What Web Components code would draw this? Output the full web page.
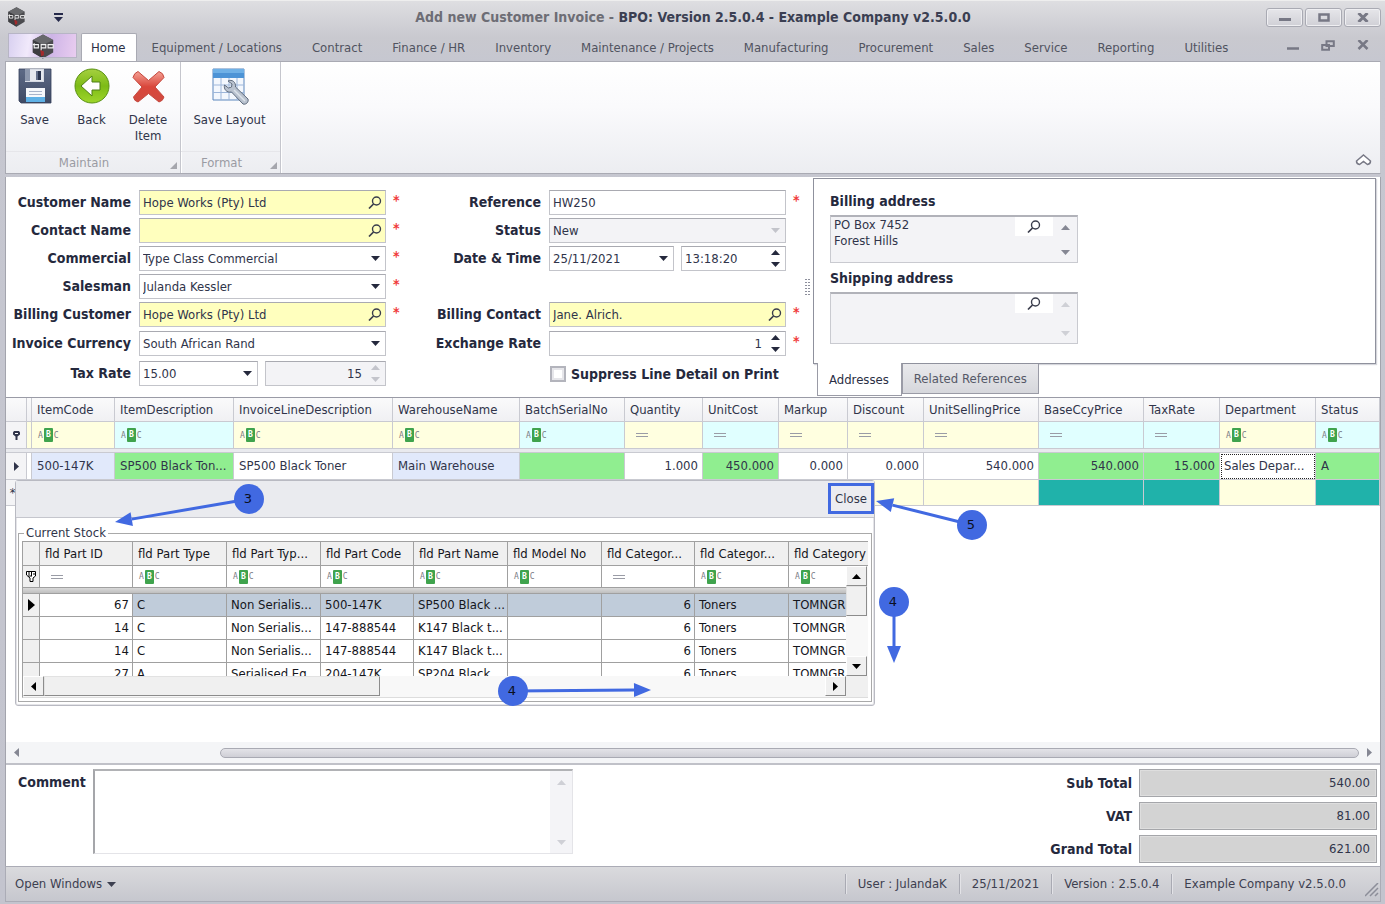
<!DOCTYPE html>
<html lang="en">
<head>
<meta charset="utf-8">
<title>Add new Customer Invoice</title>
<style>
  html, body { margin: 0; }
  body {
    font-family: "DejaVu Sans Condensed", "Noto Sans", sans-serif;
    font-size: 13px; line-height: 16px; color: #30344a;
    --line: #a3a4ad; --soft: #c9cad1; --muted: #6a6d7a; --panel: #f3f3f6;
  }
</style>
</head>
<body>
<app-window>
  <title-bar slot="title" document="Add new Customer Invoice" product="BPO: Version 2.5.0.4 - Example Company v2.5.0.0"></title-bar>
  <ribbon-tabs slot="tabs" tabs="Home|Equipment / Locations|Contract|Finance / HR|Inventory|Maintenance / Projects|Manufacturing|Procurement|Sales|Service|Reporting|Utilities"></ribbon-tabs>
  <ribbon-body slot="ribbon">
    <ribbon-group caption="Maintain">
      <ribbon-button icon="save">Save</ribbon-button>
      <ribbon-button icon="back">Back</ribbon-button>
      <ribbon-button icon="delete">Delete Item</ribbon-button>
    </ribbon-group>
    <ribbon-group caption="Format">
      <ribbon-button icon="layout" wide>Save Layout</ribbon-button>
    </ribbon-group>
  </ribbon-body>
  <invoice-form slot="form">
    <form-field slot="party" label="Customer Name" kind="lookup" value="Hope Works (Pty) Ltd" required></form-field>
    <form-field slot="party" label="Contact Name" kind="lookup" value="" required></form-field>
    <form-field slot="party" label="Commercial" kind="select" value="Type Class Commercial" required></form-field>
    <form-field slot="party" label="Salesman" kind="select" value="Julanda Kessler" required></form-field>
    <form-field slot="party" label="Billing Customer" kind="lookup" value="Hope Works (Pty) Ltd" required></form-field>
    <form-field slot="money" label="Invoice Currency" kind="select" value="South African Rand"></form-field>
    <form-field slot="money" label="Tax Rate" kind="tax" value="15.00" second="15"></form-field>

    <form-field slot="details" label="Reference" kind="text" value="HW250" required></form-field>
    <form-field slot="details" label="Status" kind="status" value="New"></form-field>
    <form-field slot="details" label="Date &amp; Time" kind="datetime" value="25/11/2021" second="13:18:20"></form-field>
    <form-field slot="contact" label="Billing Contact" kind="lookup" value="Jane. Alrich." required></form-field>
    <form-field slot="rate" label="Exchange Rate" kind="spin" value="1" required></form-field>
    <form-field slot="rate" label="Suppress Line Detail on Print" kind="check"></form-field>

    <tab-panel slot="addresses" tabs="Addresses|Related References">
      <address-box label="Billing address" lines="PO Box 7452|Forest Hills" scrolls></address-box>
      <address-box label="Shipping address" lines="" tall></address-box>
    </tab-panel>
  </invoice-form>
  <line-grid slot="grid">
    <stock-popup heading="Current Stock"></stock-popup>
    <step-callouts></step-callouts>
  </line-grid>
  <invoice-footer slot="footer">
    <comment-box></comment-box>
    <total-field slot="totals" label="Sub Total" value="540.00"></total-field>
    <total-field slot="totals" label="VAT" value="81.00"></total-field>
    <total-field slot="totals" label="Grand Total" value="621.00"></total-field>
  </invoice-footer>
  <status-bar slot="status">
    <span slot="item">User : JulandaK</span>
    <span slot="item">25/11/2021</span>
    <span slot="item">Version : 2.5.0.4</span>
    <span slot="item">Example Company v2.5.0.0</span>
  </status-bar>
</app-window>

<script>
const RESET = `
  :host, *, ::before, ::after { box-sizing: border-box; }
  :host { display: block; }
  button, input, select, textarea { font: inherit; color: inherit; margin: 0; padding: 0; border: 0; background: none; border-radius: 0; outline: 0; }
  select { appearance: none; }
  textarea { resize: none; }
  svg { display: block; flex: none; }
`;

const LOGO = (w, h) => `<svg width="${w}" height="${h}" viewBox="0 0 24 27">
  <path d="M12 .5 23 6.500V20L12 26.500 1 20V6.500Z" fill="#4b4b4f"/>
  <path d="M12 .5 23 6.500 12 12 1 6.500Z" fill="#68696c"/>
  <path d="M12 12V26.500L1 20V6.500Z" fill="#3d3d40"/>
  <path d="M9 17l4 2v4l-3 1Z" fill="#a32a2c"/>
  <path d="M1 11.500H7V15H2.500V10M10 17.500V11.500H15V15H10M17.500 11.500H23V15H17.500Z" fill="none" stroke="#f2f2f2" stroke-width="1.200"/>
</svg>`;

const ICONS = {
  down: `<svg width="9" height="5" viewBox="0 0 9 5"><path d="M0 0H9L4.500 5Z" fill="currentColor"/></svg>`,
  up: `<svg width="9" height="5" viewBox="0 0 9 5"><path d="M0 5H9L4.500 0Z" fill="currentColor"/></svg>`,
  left: `<svg width="5" height="9" viewBox="0 0 5 9"><path d="M5 0V9L0 4.500Z" fill="currentColor"/></svg>`,
  right: `<svg width="5" height="9" viewBox="0 0 5 9"><path d="M0 0V9L5 4.500Z" fill="currentColor"/></svg>`,
  search: `<svg width="14" height="14" viewBox="0 0 14 14" fill="none" stroke="#3a3d4c"><circle cx="8.500" cy="5" r="4" stroke-width="1.400"/><path d="M5.500 8 1 12.500" stroke-width="1.700"/></svg>`,
  save: `<svg width="36" height="36" viewBox="0 0 36 36">
    <defs><linearGradient id="g" x2="0" y2="1"><stop stop-color="#5d6a86"/><stop offset="1" stop-color="#3f4a64"/></linearGradient></defs>
    <path d="M2 1H34V35H4L2 33Z" fill="url(#g)" stroke="#36405a" stroke-width=".8"/>
    <path d="M8 1H27V14H8Z" fill="#d6dae3"/><path d="M8 1H13V13H8Z" fill="#8c97ad"/><path d="M13 2H26V13H13Z" fill="#e6e9ef"/>
    <path d="M19 3h5v9h-5z" fill="#2b3650"/><path d="M19 3h2v9h-2z" fill="#66728c"/>
    <path d="M9 20H28V34H9Z" fill="#f6f8fb"/><path d="M9 29H28V34H9Z" fill="#5fb1e6"/>
    <path d="M12 23.500H25M12 26.500H25" stroke="#a9b4ca" stroke-width="1.200"/></svg>`,
  back: `<svg width="36" height="36" viewBox="0 0 36 36">
    <defs><linearGradient id="g" x2="0" y2="1"><stop stop-color="#a5d040"/><stop offset=".5" stop-color="#7dbb16"/><stop offset="1" stop-color="#9fd62c"/></linearGradient></defs>
    <circle cx="18" cy="18" r="17" fill="url(#g)" stroke="#5a9214"/>
    <path d="M7 18 18 8V14H26V22H18V28Z" fill="#fff" stroke="#4f7f16"/></svg>`,
  delete: `<svg width="36" height="36" viewBox="0 0 36 36">
    <defs><linearGradient id="g" x2="0" y2="1"><stop stop-color="#f5a195"/><stop offset=".5" stop-color="#d9473b"/><stop offset="1" stop-color="#d04a40"/></linearGradient></defs>
    <path d="M8 3.500 18.500 12.500 29 3.500Q33.500 5 34 9.500L25 19 34 29Q33 33 29 34L18.500 25.500 8 34Q4 33 3.500 29L12 19 3 9.500Q4 5 8 3.500Z" fill="url(#g)" stroke="#c5493f" stroke-linejoin="round"/></svg>`,
  layout: `<svg width="38" height="38" viewBox="0 0 38 38">
    <path d="M2 1H33V32H2Z" fill="#f3f7fd" stroke="#5d87bd"/>
    <path d="M2 1H33V10H2Z" fill="#4c93d6"/><path d="M2 1H33V5H2Z" fill="#6fb0e6"/>
    <path d="M2 17H33M2 24.500H33M10 10V32M18 10V32M26 10V32" stroke="#9db6da" fill="none"/>
    <path d="M17 13c4-2 8 1 7.500 6L37 31c1 3-2 6-5 5L20.500 24c-5 1-8-3-7-7l4 3 3-1 .5-3Z" fill="#b9c2cf" stroke="#5f6b7d"/>
    <path d="M23 22 34 33" stroke="#dde3ea" stroke-width="1.500"/></svg>`,
  funnel: `<svg width="7" height="9" viewBox="0 0 7 9"><path d="M0 1.500 1 0H6L7 1.500V3.500L4.500 5.500V9H2.500V5.500L0 3.500Z" fill="#30344a"/><path d="M2 2H5V3H2Z" fill="#fff"/></svg>`,
  hand: `<svg width="10" height="11" viewBox="0 0 10 11"><path d="M.5.5H9.500V5L7 7V10.500H4V7L.5 4Z" fill="#fff" stroke="#000"/><path d="M3 1V4M5.500 1V5M7 3H9M2 5H6" stroke="#000"/></svg>`
};

/* Base element: renders markup() together with styles() into an open shadow root. */
class Part extends HTMLElement {
  constructor() { super(); this.attachShadow({ mode: "open" }); }
  connectedCallback() {
    const t = document.createElement("template");
    t.innerHTML = `<style>${RESET}${this.styles()}</style>${this.markup()}`;
    this.shadowRoot.replaceChildren(t.content.cloneNode(true));
  }
  at(name) { return this.getAttribute(name) || ""; }
  styles() { return ""; }
  markup() { return "<slot></slot>"; }
}
const define = (name, cls) => customElements.define(name, cls);

define("app-window", class extends Part {
  styles() { return `
    :host { display: flex; flex-direction: column; min-height: 100vh; padding: 0 4px 2px 5px;
      background: linear-gradient(#dedee1, #c9c9cf 36px, #c6c7d0 60px, #c3c4ce); border-top: 1px solid #eee; }
    .work { flex: 1; display: flex; flex-direction: column; background: #fff; border-left: 1px solid var(--line); border-right: 1px solid var(--line); }
    .grid { flex: 1; display: flex; flex-direction: column; }
  `; }
  markup() { return `<slot name="title"></slot><slot name="tabs"></slot><slot name="ribbon"></slot>
    <main class="work"><slot name="form"></slot><div class="grid"><slot name="grid"></slot></div><slot name="footer"></slot></main>
    <slot name="status"></slot>`; }
});

define("title-bar", class extends Part {
  styles() { return `
    :host { display: grid; grid-template-columns: 1fr auto 1fr; align-items: center; height: 32px; }
    .left { display: flex; align-items: center; gap: 28px; padding-left: 2px; }
    .quick { color: #25294a; border-top: 2px solid; padding-top: 2px; }
    h1 { margin: 0; font-size: 14px; font-weight: bold; color: #3b3f52; white-space: nowrap; }
    h1 span { color: #6d6d75; }
    .right { display: flex; justify-content: flex-end; gap: 2px; }
    .right button { width: 37px; height: 19px; display: grid; place-items: center; border: 1px solid #a9aab3; border-radius: 3px;
      background: linear-gradient(#e6e6ea, #d0d0d6); box-shadow: inset 0 0 0 1px #efeff2; }
  `; }
  markup() { return `<div class="left">${LOGO(19, 20)}<button class="quick" aria-label="Customize">${ICONS.down}</button></div>
    <h1><span>${this.at("document")} - </span>${this.at("product")}</h1>
    <div class="right">
      <button aria-label="Minimize"><svg width="12" height="8"><path d="M0 6.500H12" stroke="#777885" stroke-width="3"/></svg></button>
      <button aria-label="Maximize"><svg width="12" height="9"><rect x="1.500" y="1.500" width="9" height="6" fill="none" stroke="#777885" stroke-width="2.500"/></svg></button>
      <button aria-label="Close window"><svg width="12" height="9"><path d="M1.500 0 10.500 9M10.500 0 1.500 9" stroke="#777885" stroke-width="3"/></svg></button>
    </div>`; }
});

define("ribbon-tabs", class extends Part {
  styles() { return `
    :host { display: flex; height: 28px; }
    .app { width: 69px; height: 25px; margin: 0 4px 0 3px; display: grid; place-items: center; border: 1px solid #f3eefa; outline: 1px solid #b7b5c5;
      outline-offset: -1px; background: linear-gradient(100deg, #d8d0f0, #f1e9fb 30%, #cdb4e6 60%, #e9cdf0); }
    nav { flex: 1; display: flex; }
    a { padding: 7px 15px 0; color: #50535f; text-decoration: none; white-space: nowrap; }
    a.on { padding: 6px 10px 0 9px; color: #2b2f45; background: #fff; border: 1px solid #a9aab3; border-bottom: 0; border-radius: 2px 2px 0 0; }
    .mdi { display: flex; align-items: center; gap: 22px; padding: 0 12px 4px 0; }
  `; }
  markup() { return `<button class="app" aria-label="Application menu">${LOGO(24, 25)}</button>
    <nav>${this.at("tabs").split("|").map((t, i) => `<a href="#" class="${i ? "" : "on"}">${t}</a>`).join("")}</nav>
    <div class="mdi">
      <button aria-label="Minimize form"><svg width="12" height="10"><path d="M0 8.500H12" stroke="#777885" stroke-width="2.500"/></svg></button>
      <button aria-label="Restore form"><svg width="14" height="11"><path d="M5.500 1.200H12.800V6H5.500ZM1.200 5H8V9.800H1.200Z" fill="none" stroke="#777885" stroke-width="2"/></svg></button>
      <button aria-label="Close form"><svg width="12" height="10"><path d="M1.500 0 10.500 9M10.500 0 1.500 9" stroke="#777885" stroke-width="2.500"/></svg></button>
    </div>`; }
});

define("ribbon-body", class extends Part {
  styles() { return `
    :host { display: flex; height: 113px; background: linear-gradient(#fff, #fafafc 40%, #ecedf1); border: 1px solid #a9aab3; border-right-color: #c5c6cd; margin-bottom: 3px; }
    .fill { flex: 1; display: flex; justify-content: flex-end; align-items: flex-end; padding: 0 8px 7px; }
  `; }
  markup() { return `<slot></slot><div class="fill"><button aria-label="Collapse ribbon"><svg width="17" height="12" viewBox="0 0 17 12"><path d="M8.500 1 15.500 7Q15.500 10 12.500 10.500L8.500 7.500 4.500 10.500Q1.500 10 1.500 7Z" fill="#fff" stroke="#777885" stroke-width="1.500"/></svg></button></div>`; }
});

define("ribbon-group", class extends Part {
  styles() { return `
    :host { display: flex; flex-direction: column; border-right: 1px solid #c5c6cd; box-shadow: 1px 0 #fff; }
    .row { flex: 1; display: flex; }
    .cap { display: flex; height: 22px; align-items: center; border-top: 1px solid #e6e6ea; color: #9a9ba3; padding-right: 3px; }
    .cap span { flex: 1; text-align: center; padding-right: 8px; }
    .cap svg { align-self: flex-end; margin-bottom: 4px; }
  `; }
  markup() { return `<div class="row"><slot></slot></div><div class="cap"><span>${this.at("caption")}</span>
    <svg width="7" height="7"><path d="M7 0V7H0Z" fill="#a5a6ad"/></svg></div>`; }
});

define("ribbon-button", class extends Part {
  styles() { return `
    :host { display: flex; }
    button { width: 57px; padding: 6px 2px 0; display: flex; flex-direction: column; align-items: center; gap: 8px; }
    :host([icon="delete"]) button { width: 60px; padding-right: 6px; }
    :host([wide]) button { width: 99px; padding: 6px 4px 0 2px; gap: 6px; }
    .pic { height: 38px; }
    :host(:not([wide])) .pic { height: 36px; }
  `; }
  markup() { return `<button><span class="pic">${ICONS[this.at("icon")]}</span><span><slot></slot></span></button>`; }
});

define("invoice-form", class extends Part {
  styles() { return `
    :host { display: flex; height: 220px; }
    .col { display: flex; flex-direction: column; gap: 3px; padding-top: 13px; }
    .a { --label: 125px; --control: 247px; }
    .b { --label: 139px; --control: 237px; }
    .sub { display: flex; flex-direction: column; gap: 5px; margin-top: 1px; }
    .blank { height: 25px; }
    .grip { width: 11px; display: grid; place-items: center; }
    .side { flex: 1; display: flex; padding: 1px 4px 0 0; }
  `; }
  markup() { return `
    <div class="col a"><slot name="party"></slot><div class="sub"><slot name="money"></slot></div></div>
    <div class="col b"><slot name="details"></slot><div class="blank"></div><slot name="contact"></slot><div class="sub"><slot name="rate"></slot></div></div>
    <div class="grip"><svg width="5" height="18"><path d="M1 1V18M4 1V18" stroke="#8d8f9c" stroke-width="2" stroke-dasharray="1 2"/></svg></div>
    <div class="side"><slot name="addresses"></slot></div>`; }
});

define("form-field", class extends Part {
  styles() { return `
    :host { display: flex; height: 25px; }
    .name { width: var(--label); margin-right: 8px; text-align: right; font-weight: bold; font-size: 14px; line-height: 25px; white-space: nowrap; color: #25293d; }
    .controls { width: var(--control); display: flex; gap: 7px; }
    .box { display: flex; min-width: 0; flex: 1; border: 1px solid #c3c4ca; border-top-color: #a9aab1; background: #fff; align-items: center; }
    .box > input, .box > select { flex: 1; min-width: 0; height: 100%; padding: 0 3px; }
    .lookup { background: #ffffbe; }
    .off { background: var(--panel); }
    .btn { width: 20px; display: grid; place-items: center; color: #25293d; pointer-events: none; }
    .off .btn { color: #c3c4cb; }
    .spin { gap: 7px; }
    .right { text-align: right; }
    .w { flex: none; }
    .star { width: 9px; margin-left: 7px; color: #f03a3a; font-weight: bold; font-size: 14px; line-height: 20px; }
    .check { align-items: center; gap: 5px; padding-left: 1px; }
    .check input { appearance: none; width: 16px; height: 16px; border: 2px solid #b3b4bc; background: #fff; box-shadow: inset 0 0 0 2px #e6e6ea; }
    .check label { font-weight: bold; font-size: 14px; white-space: nowrap; color: #25293d; }
  `; }
  markup() {
    const v = this.at("value"), s = this.at("second"), name = this.at("label"), kind = this.at("kind");
    const spin = `<span class="btn spin">${ICONS.up}${ICONS.down}</span>`;
    const drop = `<span class="btn">${ICONS.down}</span>`;
    const pick = `<select id="c"><option>${v}</option></select>${drop}`;
    if (kind === "check") return `<span class="name"></span><div class="controls check"><input type="checkbox" id="c"><label for="c">${name}</label></div>`;
    const body = {
      lookup: () => `<div class="box lookup"><input id="c" value="${v}"><button class="btn" aria-label="Find ${name}">${ICONS.search}</button></div>`,
      select: () => `<div class="box">${pick}</div>`,
      status: () => `<div class="box off">${pick}</div>`,
      text: () => `<div class="box"><input id="c" value="${v}"></div>`,
      spin: () => `<div class="box"><input id="c" class="right" value="${v}">${spin}</div>`,
      tax: () => `<div class="box w" style="width:119px">${pick}</div><div class="box off"><input class="right" value="${s}" readonly aria-label="Tax percentage">${spin}</div>`,
      datetime: () => `<div class="box w" style="width:125px"><input id="c" value="${v}">${drop}</div><div class="box"><input value="${s}" aria-label="Time">${spin}</div>`
    }[kind]();
    return `<label class="name" for="c">${name}</label><div class="controls">${body}</div><span class="star">${this.hasAttribute("required") ? "*" : ""}</span>`;
  }
});

define("tab-panel", class extends Part {
  styles() { return `
    :host { flex: 1; display: flex; flex-direction: column; }
    .page { height: 186px; border: 1px solid #8f919d; box-shadow: 1px 1px 1px #d5d6dc; padding: 14px 16px; display: flex; flex-direction: column; gap: 7px; }
    .tabs { display: flex; align-items: flex-start; padding-left: 4px; }
    a { text-decoration: none; color: #555867; padding: 0 11px; line-height: 29px; height: 30px; border: 1px solid #9a9ba6; border-top: 0; background: linear-gradient(#e9e9ec, #d6d7dc); white-space: nowrap; }
    a.on { position: relative; margin-top: -1px; height: 33px; line-height: 34px; background: #fff; color: #2b2f45; padding: 0 12px 0 11px; }
  `; }
  markup() { return `<div class="page"><slot></slot></div>
    <div class="tabs">${this.at("tabs").split("|").map((t, i) => `<a href="#" class="${i ? "" : "on"}">${t}</a>`).join("")}</div>`; }
});

define("address-box", class extends Part {
  styles() { return `
    label { display: block; font-weight: bold; font-size: 14px; color: #25293d; margin-bottom: 6px; }
    .box { width: 248px; height: 48px; display: flex; background: var(--panel); border: 1px solid #c9cad0; border-top: 2px solid #b1b2b9; }
    :host([tall]) .box { height: 52px; }
    textarea { flex: 1; min-width: 0; padding: 0 3px; overflow: hidden; }
    button { width: 38px; height: 19px; display: grid; place-items: center; background: #fff; }
    .scroll { width: 24px; padding: 8px 0 7px; display: flex; flex-direction: column; justify-content: space-between; align-items: center; color: #cfd0d6; }
    :host([scrolls]) .scroll { color: #858793; }
  `; }
  markup() { return `<label for="c">${this.at("label")}</label><div class="box">
    <textarea id="c" readonly>${this.at("lines").split("|").join("\n")}</textarea>
    <button aria-label="Find address">${ICONS.search}</button><span class="scroll">${ICONS.up}${ICONS.down}</span></div>`; }
});

const ABC = `<span class="abc"><i>A</i><b>B</b><i>C</i></span>`;
const EQ = `<svg class="eq" width="12" height="6"><path d="M0 1.500H12M0 4.500H12" stroke="#9a9ca6"/></svg>`;
const ABC_CSS = `
  .abc { display: flex; align-items: center; gap: 1px; font: 8px/13px "DejaVu Sans Mono", monospace; color: #7b7d86; }
  .abc i { font-style: normal; }
  .abc b { background: #3fa34d; color: #fff; width: 9px; height: 14px; line-height: 14px; text-align: center; border-radius: 1px; }
  .eq { margin-left: 5px; }
`;

/* name, width, read-only, filter kind, value, tint */
const LINES = [
  ["ItemCode", 83, 0, "t", "500-147K", "blue"], ["ItemDescription", 119, 1, "t", "SP500 Black Ton...", "green"],
  ["InvoiceLineDescription", 159, 0, "t", "SP500 Black Toner", ""], ["WarehouseName", 127, 0, "t", "Main Warehouse", "blue"],
  ["BatchSerialNo", 105, 1, "t", "", "green"], ["Quantity", 78, 0, "n", "1.000", ""],
  ["UnitCost", 76, 1, "n", "450.000", "green"], ["Markup", 69, 0, "n", "0.000", ""],
  ["Discount", 76, 0, "n", "0.000", ""], ["UnitSellingPrice", 115, 0, "n", "540.000", ""],
  ["BaseCcyPrice", 105, 1, "n", "540.000", "green"], ["TaxRate", 76, 1, "n", "15.000", "green"],
  ["Department", 96, 0, "t", "Sales Depar...", "focus"], ["Status", 0, 1, "t", "A", "green"]
];

define("line-grid", class extends Part {
  styles() { return `
    :host { flex: 1; display: flex; flex-direction: column; position: relative; border-top: 1px solid #9a9ba6; border-bottom: 2px solid #c0c1c8; min-height: 368px; }
    table { width: 100%; table-layout: fixed; border-collapse: separate; border-spacing: 0; }
    th, td { padding: 0 4px 0 5px; text-align: left; font-weight: normal; white-space: nowrap; overflow: hidden; border-right: 1px solid var(--soft); border-bottom: 1px solid var(--soft); }
    th:first-child, td:first-child { padding: 0; }
    .head th { height: 24px; background: linear-gradient(#fafafb, #f0f0f3); }
    .filter td { height: 27px; background: #ffffe0; padding-left: 6px; }
    .filter td.ro { background: #e0ffff; }
    .band td { height: 4px; background: #e9eaee; border-right: 0; padding: 0; }
    .row td { height: 27px; }
    .new td { height: 26px; background: #ffffe0; }
    .new td.ro { background: #20b2aa; }
    td.ind, .filter td.ind, .new td.ind { background: #f4f4f6; padding: 0; }
    td.ind svg { margin: 0 auto; }
    .row .blue { background: #e1e9fb; } .row .green { background: #90ee90; }
    .focus { outline: 1px dotted #222; outline-offset: -2px; padding-left: 4px; }
    .num { text-align: right; }
    .scroll { display: flex; align-items: center; gap: 8px; height: 21px; margin-top: auto; padding: 0 8px; background: #f4f5f7; color: #858793; }
    .track { flex: 1; height: 10px; padding-left: 193px; }
    .thumb { height: 10px; border: 1px solid #a9aab3; border-radius: 5px; background: linear-gradient(#e3e3e8, #cfcfd6); }
    ${ABC_CSS}
  `; }
  markup() {
    const row = (cls, ind, f) => `<tr class="${cls}"><td class="ind">${ind}</td><td></td>${LINES.map(f).join("")}</tr>`;
    return `<table>
      <colgroup><col style="width:21px"><col style="width:5px">${LINES.map(c => c[1] ? `<col style="width:${c[1]}px">` : "<col>").join("")}</colgroup>
      <thead><tr class="head"><th></th><th></th>${LINES.map(c => `<th>${c[0]}</th>`).join("")}</tr></thead>
      <tbody>
        ${row("filter", ICONS.funnel, c => `<td class="${c[2] ? "ro" : ""}">${c[3] === "t" ? ABC : EQ}</td>`)}
        <tr class="band"><td colspan="16"></td></tr>
        ${row("row", ICONS.right, c => `<td class="${c[5]} ${c[3] === "n" ? "num" : ""}">${c[4]}</td>`)}
        ${row("new", "&nbsp;*", c => `<td class="${c[2] ? "ro" : ""}"></td>`)}
      </tbody></table>
      <slot></slot>
      <div class="scroll">${ICONS.left}<div class="track"><div class="thumb"></div></div>${ICONS.right}</div>`;
  }
});

const STOCK_COLS = [["fld Part ID", 93, "n"], ["fld Part Type", 94], ["fld Part Typ...", 94], ["fld Part Code", 93], ["fld Part Name", 94], ["fld Model No", 94], ["fld Categor...", 93, "n"], ["fld Categor...", 94], ["fld Category", 100]];
const STOCK = [
  ["67", "C", "Non Serialis...", "500-147K", "SP500 Black ...", "", "6", "Toners", "TOMNGR"],
  ["14", "C", "Non Serialis...", "147-888544", "K147 Black t...", "", "6", "Toners", "TOMNGR"],
  ["14", "C", "Non Serialis...", "147-888544", "K147 Black t...", "", "6", "Toners", "TOMNGR"],
  ["27", "A", "Serialised Eq", "204-147K", "SP204 Black", "", "6", "Toners", "TOMNGR"]
];

define("stock-popup", class extends Part {
  styles() { return `
    :host { position: absolute; left: 9px; top: 82px; width: 860px; border: 1px solid #b9bac2; border-radius: 3px; background: #fff; color: #15161c; box-shadow: inset 0 0 0 1px #e4e4e8; }
    .bar { height: 37px; display: flex; justify-content: flex-end; background: #eaebef; border-bottom: 1px solid #c5c6cd; padding: 2px 0 3px; }
    .bar button { width: 46px; border: 3px solid #4169e1; background: #ececf0; color: #30344a; }
    fieldset { margin: 7px 2px 3px; padding: 0 3px 3px; border: 1px solid #a9a9a9; min-width: 0; }
    legend { margin-left: 2px; padding: 0 2px; line-height: 16px; color: #30344a; }
    .view { display: grid; grid-template-columns: minmax(0, 1fr) 22px; grid-template-rows: 24px 110px 21px; border: 1px solid #a0a0a0; border-right: 0; border-bottom-color: #ddd; }
    .clip { grid-area: 1 / 1 / 3 / 3; overflow: hidden; min-height: 0; }
    table { width: 866px; table-layout: fixed; border-collapse: separate; border-spacing: 0; }
    th, td { font-weight: normal; text-align: left; white-space: nowrap; overflow: hidden; padding: 0 3px 0 4px; height: 23px; border-right: 1px solid #a0a0a0; border-bottom: 1px solid #a0a0a0; }
    th { background: #f0f0f0; height: 24px; padding: 0 4px 0 5px; }
    .filter td { height: 22px; padding-left: 6px; }
    .band td { height: 6px; background: linear-gradient(#d9d9d9, #bfbfbf); border-right: 0; padding: 0; }
    .sel td { background: #c0ccda; } .sel td.num:nth-child(2) { background: #fff; }
    td.ind.ind { background: #f0f0f0; padding: 0; }
    td.ind svg { margin: 0 auto; }
    .num { text-align: right; }
    .v, .h { display: flex; background: #f8f8f8; }
    .v { grid-area: 2 / 2; flex-direction: column; justify-content: space-between; }
    .h { grid-area: 3 / 1; }
    .corner { grid-area: 3 / 2; background: #f0f0f0; }
    .key { width: 21px; height: 20px; display: grid; place-items: center; background: #f0f0f0; border: 1px solid #fff; border-right-color: #8c8c8c; border-bottom-color: #8c8c8c; color: #000; }
    .thumb { background: #f0f0f0; border: 1px solid #e2e2e2; border-right-color: #8c8c8c; border-bottom-color: #8c8c8c; }
    .v .thumb { height: 30px; width: 21px; margin-bottom: auto; }
    .h .thumb { width: 336px; height: 20px; margin-right: auto; }
    ${ABC_CSS}
  `; }
  markup() {
    const num = i => STOCK_COLS[i][2] ? "num" : "";
    return `<div class="bar"><button>Close</button></div>
    <fieldset><legend>${this.at("heading")}</legend><div class="view">
      <div class="clip"><table>
        <colgroup><col style="width:17px">${STOCK_COLS.map(c => `<col style="width:${c[1]}px">`).join("")}</colgroup>
        <thead><tr><th></th>${STOCK_COLS.map(c => `<th>${c[0]}</th>`).join("")}</tr></thead>
        <tbody><tr class="filter"><td class="ind">${ICONS.hand}</td>${STOCK_COLS.map(c => `<td>${c[2] ? EQ : ABC}</td>`).join("")}</tr>
        <tr class="band"><td colspan="10"></td></tr>
        ${STOCK.map((r, n) => `<tr class="${n ? "" : "sel"}"><td class="ind">${n ? "" : `<svg width="7" height="12"><path d="M0 0V12L7 6Z"/></svg>`}</td>${r.map((v, i) => `<td class="${num(i)}">${v}</td>`).join("")}</tr>`).join("")}
        </tbody></table></div>
      <div class="v"><span class="key">${ICONS.up}</span><span class="thumb"></span><span class="key">${ICONS.down}</span></div>
      <div class="h"><span class="key">${ICONS.left}</span><span class="thumb"></span><span class="key">${ICONS.right}</span></div>
      <div class="corner"></div>
    </div></fieldset>`;
  }
});

/* Numbered tutorial markers that float over the grid and its popup. */
define("step-callouts", class extends Part {
  styles() { return `
    :host { position: absolute; left: 9px; top: 82px; pointer-events: none; }
    text { font: 13px "DejaVu Sans", sans-serif; text-anchor: middle; fill: #0b0f22; }
  `; }
  markup() {
    const steps = [[3, 249, 499, 115, 522], [5, 972, 525, 876, 501], [4, 894, 602, 894, 663], [4, 513, 691, 651, 690]];
    return `<svg width="985" height="240" viewBox="15 480 985 240">${steps.map(([n, x, y, tx, ty]) => {
      const a = Math.atan2(ty - y, tx - x), c = Math.cos(a), s = Math.sin(a), bx = tx - 17 * c, by = ty - 17 * s;
      return `<path d="M${x} ${y}L${bx} ${by}" stroke="#4169e1" stroke-width="3"/>
        <path d="M${tx} ${ty}L${bx - 7 * s} ${by + 7 * c}L${bx + 7 * s} ${by - 7 * c}Z" fill="#4169e1"/>
        <circle cx="${x}" cy="${y}" r="15" fill="#4169e1"/><text x="${x - 1}" y="${y + 4}">${n}</text>`;
    }).join("")}</svg>`;
  }
});

define("invoice-footer", class extends Part {
  styles() { return `
    :host { display: flex; justify-content: space-between; height: 101px; padding: 4px 3px 0 12px; }
    .totals { display: flex; flex-direction: column; gap: 5px; }
  `; }
  markup() { return `<slot></slot><div class="totals"><slot name="totals"></slot></div>`; }
});

define("comment-box", class extends Part {
  styles() { return `
    :host { display: flex; gap: 5px; }
    label { font-weight: bold; font-size: 14px; color: #25293d; padding-top: 5px; width: 70px; }
    .box { display: flex; width: 480px; height: 85px; border: 1px solid #e4e4e8; border-top: 2px solid #b1b2b5; border-left: 2px solid #a5a6aa; }
    textarea { flex: 1; min-width: 0; }
    .scroll { width: 22px; background: #f4f4f7; display: flex; flex-direction: column; justify-content: space-between; align-items: center; padding: 9px 0 8px; color: #cfd0d6; }
  `; }
  markup() { return `<label for="c">Comment</label><div class="box"><textarea id="c"></textarea><span class="scroll">${ICONS.up}${ICONS.down}</span></div>`; }
});

define("total-field", class extends Part {
  styles() { return `
    :host { display: flex; justify-content: flex-end; gap: 7px; height: 28px; }
    label { font-weight: bold; font-size: 14px; color: #25293d; line-height: 28px; white-space: nowrap; }
    input { width: 238px; text-align: right; padding: 0 6px; background: #d3d3d3; border: 1px solid #a5a6aa; box-shadow: inset 0 0 0 1px #dedede; }
  `; }
  markup() { return `<label for="c">${this.at("label")}</label><input id="c" readonly value="${this.at("value")}">`; }
});

define("status-bar", class extends Part {
  styles() { return `
    :host { display: flex; align-items: center; height: 36px; padding: 0 1px 0 9px; background: linear-gradient(#dadadd, #c6c7ce); border: 1px solid #abacb6; }
    button { display: flex; align-items: center; gap: 5px; margin-right: auto; color: #3d4050; }
    ::slotted(span) { padding: 2px 12px; border-left: 1px solid #a9aab3; box-shadow: inset 1px 0 #e3e3e7; white-space: nowrap; color: #3d4050; }
    .grip { align-self: flex-end; margin: 0 0 4px 7px; }
  `; }
  markup() { return `<button>Open Windows ${ICONS.down}</button><slot name="item"></slot>
    <svg class="grip" width="14" height="14"><path d="M0 13 13 0M5 13 13 5M10 13 13 10" stroke="#8c8e99" stroke-width="1.500"/></svg>`; }
});
</script>
</body>
</html>
